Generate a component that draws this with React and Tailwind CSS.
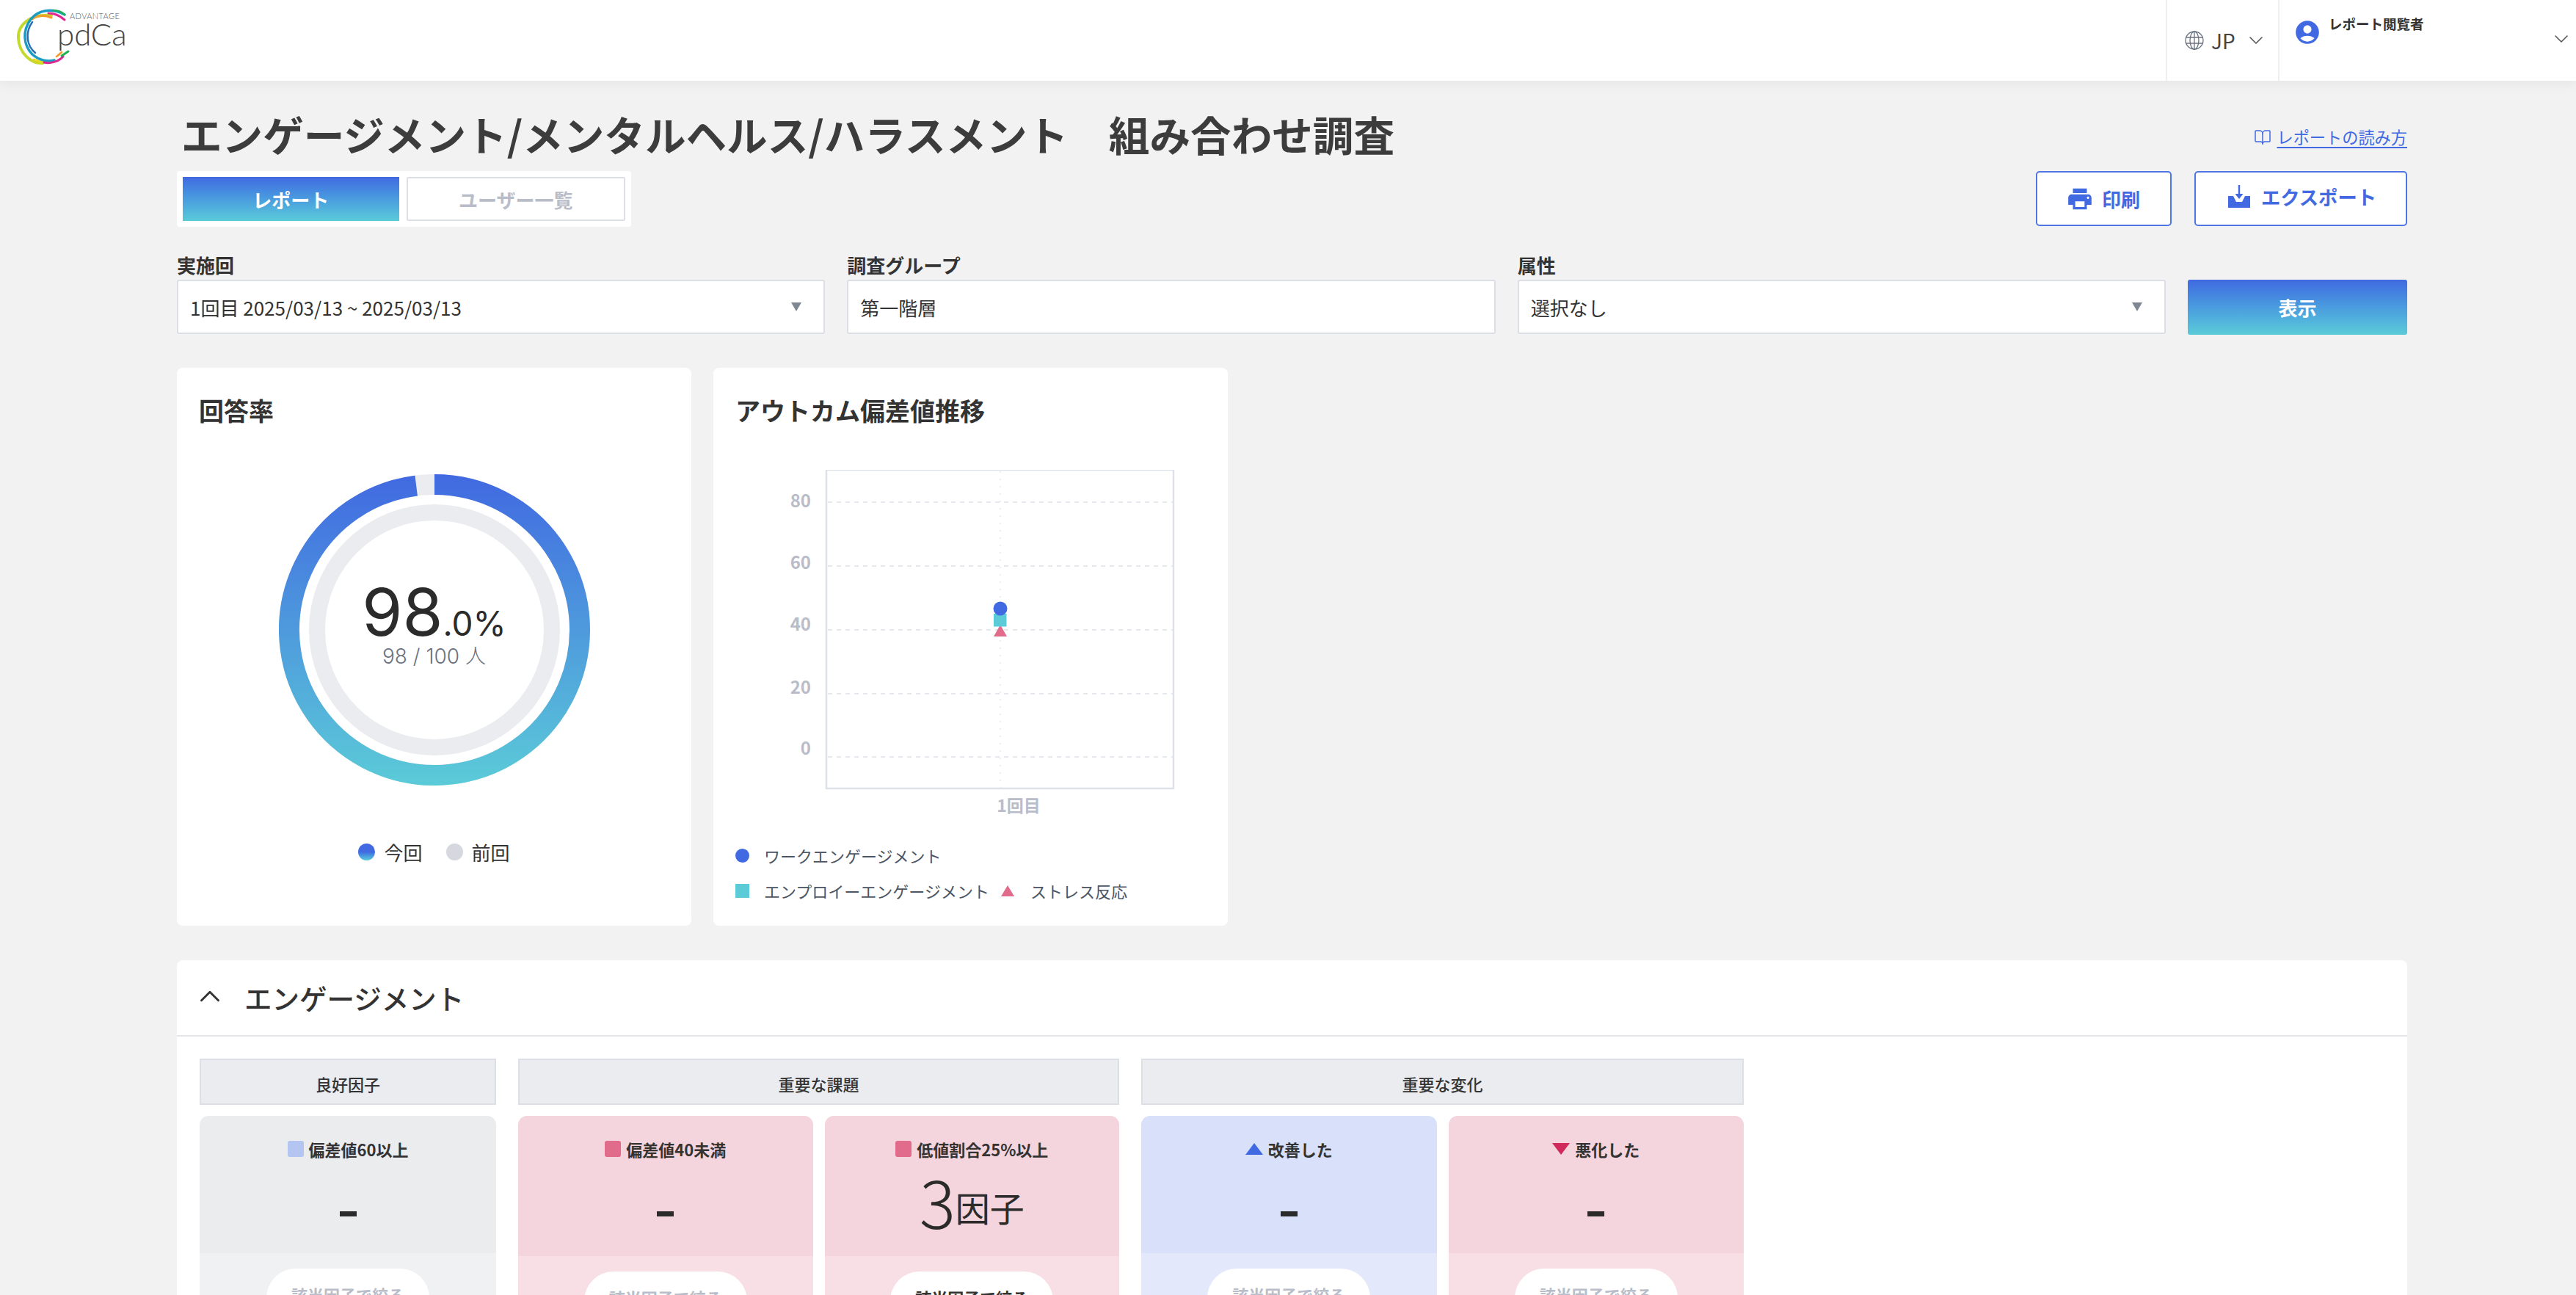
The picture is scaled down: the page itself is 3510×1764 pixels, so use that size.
import { ChevronDown, ChevronUp, BookOpen } from "lucide-react";
import { MdAccountCircle, MdLocalPrintshop } from "react-icons/md";

const FONT = { fontFamily: '"Noto Sans CJK JP", "Noto Sans", sans-serif' };

function Logo() {
  return (
    <div className="relative w-[180px] h-[110px] shrink-0">
      <svg width="100" height="100" viewBox="0 0 100 100" fill="none" strokeLinecap="round" className="absolute left-0 top-0">
        <path d="M70 21C40 18 24 35 25 52C26 72 42 87 58 86" stroke="#c5d92d" strokeWidth="4" />
        <path d="M46 81C54 85 60 85 66 84" stroke="#e8d820" strokeWidth="3" />
        <path d="M70 24C60 20 50 21 44 26" stroke="#f39a2b" strokeWidth="3" />
        <path d="M88 20C70 10 52 14 42 26C30 42 32 62 44 74C54 83 66 84 74 82" stroke="#1b9cc4" strokeWidth="3.5" />
        <path d="M44 30C34 44 36 62 48 72" stroke="#2a6fb5" strokeWidth="2.5" />
        <path d="M88 27C80 20 72 18 66 18" stroke="#e6268f" strokeWidth="3" />
        <path d="M60 85C68 87 80 84 86 77" stroke="#d9288f" strokeWidth="3" />
        <path d="M72 14C78 14 84 16 88 20" stroke="#1fb05a" strokeWidth="2.5" />
        <path d="M84 76C87 74 90 72 93 70" stroke="#20b050" strokeWidth="3" />
        <path d="M77 77C80 75 82 73 84 71" stroke="#f39a2b" strokeWidth="2.5" />
      </svg>
      <span className="absolute left-[95px] top-[16px] text-[11px] leading-[11px] text-[#555] font-['Lato'] font-light tracking-[0.4px]">ADVANTAGE</span>
      <span className="absolute left-[78px] top-[27px] text-[42px] leading-[38px] text-[#444] font-['Lato'] font-light">pdCa</span>
    </div>
  );
}

function Globe() {
  return (
    <svg width="28" height="28" viewBox="0 0 28 28" fill="none" stroke="#6b7280" strokeWidth="1.3">
      <circle cx="14" cy="14" r="12" />
      <ellipse cx="14" cy="14" rx="6" ry="12" />
      <path d="M14 2V26M2.5 10H25.5M2.5 18H25.5" />
    </svg>
  );
}

function ExportIcon() {
  return (
    <svg width="30" height="32" viewBox="0 0 30 32" fill="#4169e1">
      <path d="M13.8 0H16.2V12H20.5L15 19L9.5 12H13.8Z" />
      <path d="M0 15H7L11 23H19L23 15H30V31H0Z" />
    </svg>
  );
}

function Select({ label, value, arrow = true }) {
  return (
    <div className="flex-1 min-w-0">
      <div className="h-[36px] text-[26px] leading-[32px] font-bold text-[#333]">{label}</div>
      <div className="h-[74px] bg-white border-2 border-[#dcdfe6] rounded-[3px] flex items-center justify-between pl-[16px] pr-[30px]">
        <span className="text-[26px] text-[#333]">{value}</span>
        {arrow && <span className="w-0 h-0 border-x-[7px] border-x-transparent border-t-[12px] border-t-[#7f8792]" />}
      </div>
    </div>
  );
}

function DonutChart() {
  const r = 198;
  const c = 212;
  const end = (352.8 * Math.PI) / 180;
  const ex = c + r * Math.sin(end);
  const ey = c - r * Math.cos(end);
  return (
    <svg width="424" height="424" viewBox="0 0 424 424" fill="none">
      <defs>
        <linearGradient id="ring" x1="0" y1="0" x2="0" y2="424" gradientUnits="userSpaceOnUse">
          <stop offset="0" stopColor="#4169e1" />
          <stop offset="1" stopColor="#5bcbd8" />
        </linearGradient>
      </defs>
      <circle cx={c} cy={c} r={r} stroke="#ebecef" strokeWidth="28" />
      <path d={`M${c} ${c - r}A${r} ${r} 0 1 1 ${ex} ${ey}`} stroke="url(#ring)" strokeWidth="28" />
      <circle cx={c} cy={c} r="160" stroke="#ebecef" strokeWidth="22" />
    </svg>
  );
}

function TrendChart() {
  const ticks = [
    [80, 44, 51],
    [60, 131, 135],
    [40, 218, 219],
    [20, 305, 305],
    [0, 391, 388],
  ];
  return (
    <svg width="580" height="480" viewBox="0 0 580 480" fill="none">
      <path d="M95 0V434H568V0H95" stroke="#dfe1e8" strokeWidth="2.5" />
      {ticks.map(([label, y, textY]) => (
        <g key={label}>
          <path d={`M97 ${y}H567`} stroke="#dfe1e8" strokeWidth="1.5" strokeDasharray="6 6" />
          <text x="74" y={textY} textAnchor="end" fontSize="24" fontWeight="700" fill="#b9bdc9">{label}</text>
        </g>
      ))}
      <path d="M332 2V434" stroke="#e6e8ed" strokeWidth="1.5" strokeDasharray="2 8" />
      <text x="357" y="466" textAnchor="middle" fontSize="23" fontWeight="700" fill="#b9bdc9">1回目</text>
      <path d="M332 211L341 227H323Z" fill="#e06b8a" />
      <rect x="323" y="196" width="17.5" height="17.5" fill="#5bcbd8" />
      <circle cx="332" cy="189" r="9.5" fill="#4169e1" />
    </svg>
  );
}

function GroupHead({ children }) {
  return (
    <div className="h-[63px] bg-[#ebecef] border-2 border-[#dcdfe6] flex items-center justify-center pt-[6px] text-[22px] font-medium text-[#333]">
      {children}
    </div>
  );
}

function FactorCard({ marker, label, value, tone, active, tall }) {
  const tones = {
    gray: ["bg-[#ebecee]", "bg-[#f0f1f3]"],
    pink: ["bg-[#f4d4dd]", "bg-[#f7dfe5]"],
    blue: ["bg-[#d9e0f9]", "bg-[#e3e8fa]"],
  };
  return (
    <div className="flex-1 min-w-0 h-[300px] rounded-t-[12px] overflow-hidden flex flex-col">
      <div className={`${tones[tone][0]} ${tall ? "h-[191px]" : "h-[187px]"} shrink-0 flex flex-col items-center`}>
        <div className="h-[20px] mt-[35px] flex items-center gap-[7px] text-[22px] font-bold text-[#333]">
          {marker}
          <span>{label}</span>
        </div>
        {value ? (
          <div className="flex items-end text-[#2b2b2b] mt-[11px]">
            <span className="text-[92px] leading-[96px] font-light">{value}</span>
            <span className="text-[47px] leading-[76px]">因子</span>
          </div>
        ) : (
          <div className="w-[23px] h-[7px] bg-[#2b2b2b] mt-[75px]" />
        )}
      </div>
      <div className={`${tones[tone][1]} flex-1 flex justify-center pt-[21px]`}>
        <div className={`w-[222px] h-[90px] bg-white rounded-[40px] text-center pt-[19px] text-[22px] font-bold ${active ? "text-[#333]" : "text-[#b9bdc9]"}`}>
          該当因子で絞る
        </div>
      </div>
    </div>
  );
}

const Square = ({ color }) => <span className={`w-[22px] h-[22px] rounded-[3px] ${color}`} />;

export default function App() {
  return (
    <div style={FONT} className="h-[1764px] overflow-hidden bg-[#f2f2f2]">
      <header className="h-[110px] bg-white flex shadow-[0_4px_16px_rgba(0,0,0,0.06)] relative">
        <Logo />
        <div className="ml-auto w-[153px] border-l-2 border-[#eeeff1] flex items-center pl-[23px] gap-[9px]">
          <Globe />
          <span className="text-[28px] text-[#444]">JP</span>
          <ChevronDown size={32} strokeWidth={1.2} className="text-[#555] ml-[3px]" />
        </div>
        <div className="w-[406px] border-l-2 border-[#eeeff1] flex pl-[19px] pr-[4px] relative">
          <MdAccountCircle size={38} className="text-[#4169e1] mt-[25px]" />
          <span className="text-[18.5px] font-bold text-[#333] leading-[28px] ml-[10px] mt-[18px]">レポート閲覧者</span>
          <ChevronDown size={32} strokeWidth={1.2} className="text-[#555] ml-auto mt-[37px]" />
        </div>
      </header>

      <main className="pl-[241px] pr-[230px] pt-[40px]">
        <div className="h-[64px] flex items-center justify-between">
          <h1 className="text-[55.6px] leading-[64px] font-bold text-[#3c3c3c] pl-[6px]">
            エンゲージメント/メンタルヘルス/ハラスメント　組み合わせ調査
          </h1>
          <a className="flex items-center gap-[8px] text-[#4169e1] text-[22.2px] mt-[10px]">
            <BookOpen size={24} strokeWidth={1.5} />
            <span className="underline underline-offset-[4px]">レポートの読み方</span>
          </a>
        </div>

        <div className="mt-[19px] flex justify-between">
          <div className="h-[76px] w-[619px] bg-white rounded-[4px] p-[8px] flex gap-[10px]">
            <div className="flex-1 bg-linear-to-b from-[#4169e1] to-[#5bcbd8] flex items-center justify-center text-[26px] font-bold text-white">
              レポート
            </div>
            <div className="flex-1 border-2 border-[#dcdfe6] rounded-[2px] flex items-center justify-center text-[26px] font-bold text-[#b9bdc9]">
              ユーザー一覧
            </div>
          </div>
          <div className="flex gap-[31px]">
            <button className="w-[185px] h-[75px] bg-white border-[2.5px] border-[#4f75e5] rounded-[5px] flex items-center justify-center gap-[11px] text-[26px] font-bold text-[#4169e1] pr-[2px]">
              <MdLocalPrintshop size={38} />
              印刷
            </button>
            <button className="w-[290px] h-[75px] bg-white border-[2.5px] border-[#4f75e5] rounded-[5px] flex items-center justify-center gap-[15px] text-[26.3px] font-bold text-[#4169e1] pb-[6px] pl-[4px]">
              <ExportIcon />
              エクスポート
            </button>
          </div>
        </div>

        <div className="mt-[36px] flex gap-[30px]">
          <Select label="実施回" value="1回目 2025/03/13 ~ 2025/03/13" />
          <Select label="調査グループ" value="第一階層" arrow={false} />
          <Select label="属性" value="選択なし" />
          <div className="w-[299px] pt-[36px]">
            <button className="w-full h-[75px] rounded-[3px] bg-linear-to-b from-[#4169e1] to-[#5bcbd8] text-white text-[26px] font-bold">
              表示
            </button>
          </div>
        </div>

        <div className="mt-[45px] flex gap-[30px]">
          <section className="w-[701px] h-[760px] bg-white rounded-[8px] px-[30px] pt-[34px]">
            <h2 className="text-[34px] leading-[48px] font-bold text-[#333]">回答率</h2>
            <div className="relative w-[424px] h-[424px] mx-auto mt-[63px]">
              <DonutChart />
              <div className="absolute inset-0 flex flex-col items-center font-['Inter','Noto_Sans_CJK_JP',sans-serif]">
                <div className="mt-[138px] text-[#2b2b2b] leading-[100px] whitespace-nowrap">
                  <span className="text-[89px]">98</span>
                  <span className="text-[46px]">.0%</span>
                </div>
                <div className="text-[28px] leading-[38px] font-light text-[#6b7280] -mt-[35px]">98 / 100 人</div>
              </div>
            </div>
            <div className="mt-[71px] flex justify-center items-center text-[26px] text-[#333] gap-[12px]">
              <span className="w-[23px] h-[23px] rounded-full bg-linear-to-b from-[#4169e1] from-50% to-[#5bcbd8]" />
              <span className="mr-[20px]">今回</span>
              <span className="w-[23px] h-[23px] rounded-full bg-[#d5d8df]" />
              <span>前回</span>
            </div>
          </section>

          <section className="w-[701px] h-[760px] bg-white rounded-[8px] px-[30px] pt-[34px]">
            <h2 className="text-[34px] leading-[48px] font-bold text-[#333]">アウトカム偏差値推移</h2>
            <div className="ml-[29px] mt-[57px]">
              <TrendChart />
            </div>
            <div className="mt-[30px] text-[22px] text-[#4b5563]">
              <div className="flex items-center h-[30px]">
                <span className="w-[19px] h-[19px] rounded-full bg-[#4169e1] mr-[20px]" />
                ワークエンゲージメント
              </div>
              <div className="flex items-center h-[30px] mt-[18px]">
                <span className="w-[19px] h-[19px] bg-[#5bcbd8] mr-[20px]" />
                エンプロイーエンゲージメント
                <span className="w-0 h-0 ml-[16px] mr-[22px] border-x-[9px] border-x-transparent border-b-[15px] border-b-[#e06b8a]" />
                ストレス反応
              </div>
            </div>
          </section>
        </div>

        <section className="mt-[47px] bg-white rounded-t-[8px] h-[600px]">
          <div className="h-[104px] border-b-2 border-[#e4e6ea] flex items-center pl-[22px] gap-[24px]">
            <ChevronUp size={46} strokeWidth={1.5} className="text-[#333] -mt-[4px]" />
            <h2 className="text-[37.5px] font-medium text-[#333]">エンゲージメント</h2>
          </div>
          <div className="pl-[31px] pt-[30px] flex gap-[30px]">
            <div className="w-[404px]">
              <GroupHead>良好因子</GroupHead>
              <div className="mt-[15px] flex">
                <FactorCard tone="gray" label="偏差値60以上" marker={<Square color="bg-[#b5c5f2]" />} />
              </div>
            </div>
            <div className="w-[819px]">
              <GroupHead>重要な課題</GroupHead>
              <div className="mt-[15px] flex gap-[16px]">
                <FactorCard tone="pink" tall label="偏差値40未満" marker={<Square color="bg-[#e06b8a]" />} />
                <FactorCard tone="pink" tall label="低値割合25%以上" value="3" active marker={<Square color="bg-[#e06b8a]" />} />
              </div>
            </div>
            <div className="w-[821px]">
              <GroupHead>重要な変化</GroupHead>
              <div className="mt-[15px] flex gap-[16px]">
                <FactorCard tone="blue" label="改善した" marker={<span className="w-0 h-0 border-x-[12px] border-x-transparent border-b-[16px] border-b-[#4169e1]" />} />
                <FactorCard tone="pink" label="悪化した" marker={<span className="w-0 h-0 border-x-[12px] border-x-transparent border-t-[16px] border-t-[#cf2a5a]" />} />
              </div>
            </div>
          </div>
        </section>
      </main>
    </div>
  );
}
